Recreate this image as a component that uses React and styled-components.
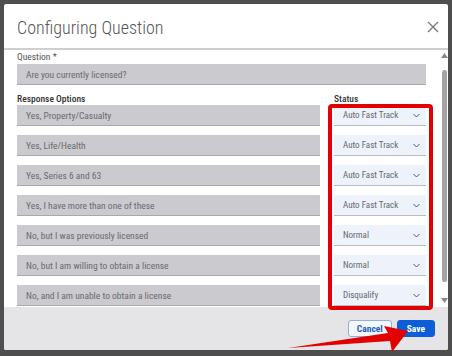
import React from 'react';
import styled, { createGlobalStyle } from 'styled-components';

const GlobalStyle = createGlobalStyle`
  html, body {
    margin: 0;
    padding: 0;
    background: #4e4e4e;
    font-family: "Roboto Condensed", Roboto, "Liberation Sans", Arial, sans-serif;
    font-stretch: condensed;
  }
`;

const Page = styled.div`
  position: relative;
  width: 452px;
  height: 356px;
  padding: 4px;
  box-sizing: border-box;
  overflow: hidden;
`;

const Modal = styled.div`
  position: relative;
  width: 444px;
  height: 346px;
  background: #fff;
  border-radius: 2px;
  display: flex;
  flex-direction: column;
  overflow: hidden;
`;

const Header = styled.div`
  height: 42px;
  flex: none;
  display: flex;
  align-items: center;
  justify-content: space-between;
  padding: 2px 7px 0 13px;
  border-bottom: 2px solid #cfcfd1;
`;

const Title = styled.h1`
  margin: 0;
  font-size: 18px;
  font-weight: 300;
  color: #555;
`;

const CloseButton = styled.button`
  width: 16px;
  height: 16px;
  padding: 0;
  border: 0;
  background: none;
  display: flex;
  align-items: center;
  justify-content: center;
  cursor: pointer;
`;

const Body = styled.div`
  flex: 1;
  display: flex;
  min-height: 0;
`;

const Content = styled.div`
  flex: 1;
  padding: 1px 14px 0 13px;
  overflow: hidden;
`;

const Label = styled.div`
  font-size: 9.5px;
  line-height: 12px;
  color: ${p => (p.$strong ? '#333' : '#555')};
  font-weight: ${p => (p.$strong ? 500 : 400)};
`;

const TextField = styled.div`
  height: 20px;
  background: #cbcbcf;
  border-bottom: 1px solid #a8a8ad;
  display: flex;
  align-items: center;
  padding-left: 9px;
  font-size: 9.5px;
  color: #6a6a6e;
`;

const Grid = styled.div`
  display: grid;
  grid-template-columns: 303px 92px;
  column-gap: 14px;
  row-gap: 9px;
`;

const HeadRow = styled(Grid)`
  margin-top: 8px;
`;

const Select = styled.div`
  height: 20px;
  background: #eef3fb;
  border-bottom: 1px solid #b9bcc2;
  display: flex;
  align-items: center;
  justify-content: space-between;
  padding: 0 6px 0 9px;
  font-size: 9px;
  color: #66676b;
`;

const Scrollbar = styled.div`
  width: 8px;
  flex: none;
  display: flex;
  flex-direction: column;
  align-items: center;
  padding: 3px 0 4px;
  box-sizing: border-box;
`;

const Thumb = styled.div`
  width: 5px;
  flex: 1;
  margin: 12px 0 16px;
  background: #a3a3a3;
  border-radius: 3px;
`;

const Footer = styled.div`
  height: 43px;
  flex: none;
  background: #e5e5e7;
  display: flex;
  align-items: center;
  justify-content: flex-end;
  gap: 5px;
  padding-right: 13px;
`;

const Button = styled.button`
  height: 17px;
  padding: 0 ${p => (p.$primary ? 9 : 8)}px;
  border-radius: 3px;
  font-family: inherit;
  font-size: 9.5px;
  font-weight: 700;
  border: 1px solid ${p => (p.$primary ? '#0b5ed7' : '#8fb0e0')};
  background: ${p => (p.$primary ? '#0b5ed7' : '#f4f7fc')};
  color: ${p => (p.$primary ? '#fff' : '#1f5fc4')};
  cursor: pointer;
`;

const Highlight = styled.div`
  position: absolute;
  left: 324px;
  top: 100px;
  width: 105px;
  height: 206px;
  box-sizing: border-box;
  border: 4px solid #e30000;
  border-radius: 4px;
  pointer-events: none;
`;

const Arrow = styled.svg`
  position: absolute;
  left: 0;
  top: 0;
  pointer-events: none;
`;

const Chevron = () => (
  <svg width="7" height="5" viewBox="0 0 7 5">
    <path d="M0.5 1l3 3 3-3" fill="none" stroke="#3361ad" strokeWidth="1" />
  </svg>
);

const ScrollArrow = ({ down }) => (
  <svg width="7" height="5" viewBox="0 0 7 5">
    <path d={down ? 'M0 0h7L3.5 5z' : 'M0 5h7L3.5 0z'} fill="#8a8a8a" />
  </svg>
);

const options = [
  ['Yes, Property/Casualty', 'Auto Fast Track'],
  ['Yes, Life/Health', 'Auto Fast Track'],
  ['Yes, Series 6 and 63', 'Auto Fast Track'],
  ['Yes, I have more than one of these', 'Auto Fast Track'],
  ['No, but I was previously licensed', 'Normal'],
  ['No, but I am willing to obtain a license', 'Normal'],
  ['No, and I am unable to obtain a license', 'Disqualify'],
];

const App = () => (
  <Page>
    <GlobalStyle />
    <Modal>
      <Header>
        <Title>Configuring Question</Title>
        <CloseButton aria-label="Close">
          <svg width="12" height="12" viewBox="0 0 12 12">
            <path d="M1 1l10 10M11 1L1 11" stroke="#777" strokeWidth="1.3" />
          </svg>
        </CloseButton>
      </Header>
      <Body>
        <Content>
          <Label>Question *</Label>
          <TextField style={{ marginTop: 1 }}>Are you currently licensed?</TextField>
          <HeadRow>
            <Label $strong>Response Options</Label>
            <Label $strong>Status</Label>
          </HeadRow>
          <Grid>
            {options.map(([text, status]) => (
              <React.Fragment key={text}>
                <TextField>{text}</TextField>
                <Select>
                  {status}
                  <Chevron />
                </Select>
              </React.Fragment>
            ))}
          </Grid>
        </Content>
        <Scrollbar>
          <ScrollArrow />
          <Thumb />
          <ScrollArrow down />
        </Scrollbar>
      </Body>
      <Footer>
        <Button>Cancel</Button>
        <Button $primary>Save</Button>
      </Footer>
      <Highlight />
    </Modal>
    <Arrow width="452" height="356" viewBox="0 0 452 356">
      <path d="M288 348 L388 333 L384 326 L408 331 L392 352 L390 341 Z" fill="#e30000" />
    </Arrow>
  </Page>
);

export default App;
